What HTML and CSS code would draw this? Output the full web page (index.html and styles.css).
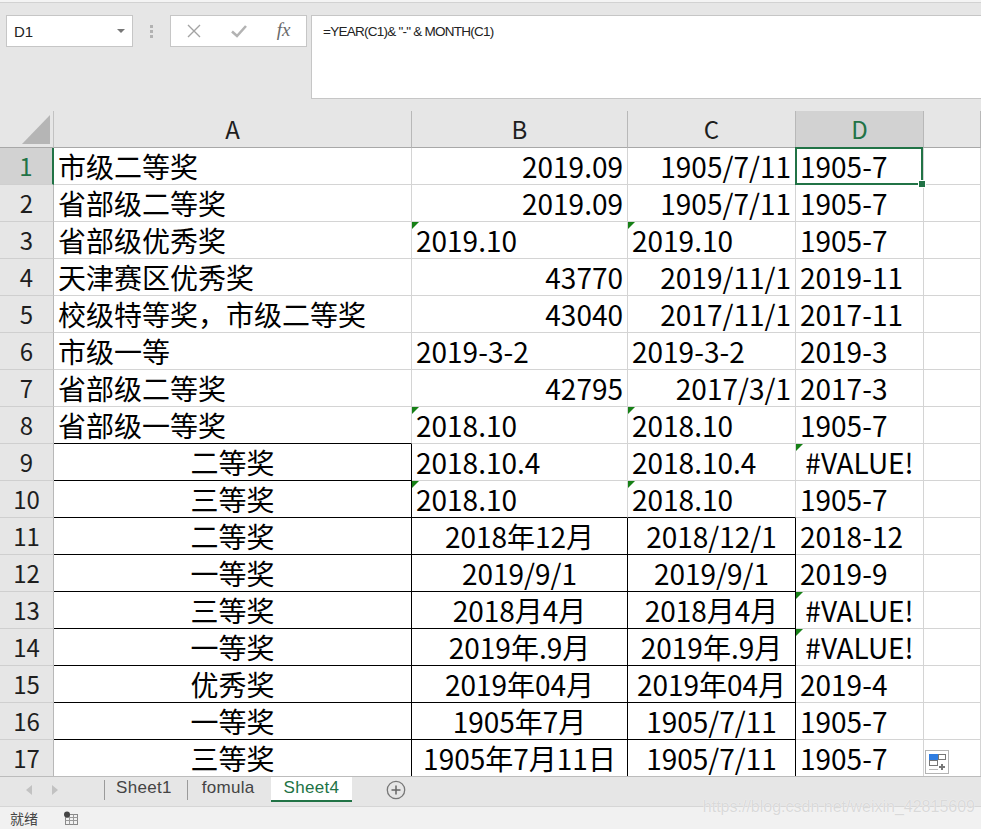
FILE: index.html
```html
<!DOCTYPE html>
<html lang="zh">
<head>
<meta charset="utf-8">
<title>Sheet4</title>
<link rel="stylesheet" href="styles.css">
</head>
<body>
<div class="top">
  <div class="topline"></div>
  <div class="frow">
    <div class="namebox"><span>D1</span><i class="caret"></i></div>
    <div class="grip"><i></i><i></i><i></i></div>
    <div class="fbtns">
      <span class="fbtn"><svg width="16" height="16" viewBox="0 0 16 16"><path d="M2 2L14 14M14 2L2 14" stroke="#a3a3a3" stroke-width="1.4" fill="none"/></svg></span>
      <span class="fbtn"><svg width="18" height="16" viewBox="0 0 18 16"><path d="M2 8.5L7 13L16 3" stroke="#b3b3b3" stroke-width="2.6" fill="none"/></svg></span>
      <span class="fbtn fx">fx</span>
    </div>
    <div class="fbar">=YEAR(C1)&amp; "-" &amp; MONTH(C1)</div>
  </div>
</div>

<div class="sheet">
  <div class="c h corner"><svg width="53" height="36" viewBox="0 0 53 36"><path d="M50 4V33H22Z" fill="#b5b5b5"/></svg></div>
  <div class="c h">A</div><div class="c h">B</div><div class="c h">C</div><div class="c h hs">D</div><div class="c h"></div>

  <div class="c rh rs">1</div><div class="c">市级二等奖</div><div class="c r">2019.09</div><div class="c r">1905/7/11</div><div class="c sel">1905-7<span class="selbox"><i class="handle"></i></span></div><div class="c"></div>
  <div class="c rh">2</div><div class="c">省部级二等奖</div><div class="c r">2019.09</div><div class="c r">1905/7/11</div><div class="c">1905-7</div><div class="c"></div>
  <div class="c rh">3</div><div class="c">省部级优秀奖</div><div class="c t">2019.10</div><div class="c t">2019.10</div><div class="c">1905-7</div><div class="c"></div>
  <div class="c rh">4</div><div class="c">天津赛区优秀奖</div><div class="c r">43770</div><div class="c r">2019/11/1</div><div class="c">2019-11</div><div class="c"></div>
  <div class="c rh">5</div><div class="c">校级特等奖，市级二等奖</div><div class="c r">43040</div><div class="c r">2017/11/1</div><div class="c">2017-11</div><div class="c"></div>
  <div class="c rh">6</div><div class="c">市级一等</div><div class="c">2019-3-2</div><div class="c">2019-3-2</div><div class="c">2019-3</div><div class="c"></div>
  <div class="c rh">7</div><div class="c">省部级二等奖</div><div class="c r">42795</div><div class="c r">2017/3/1</div><div class="c">2017-3</div><div class="c"></div>
  <div class="c rh">8</div><div class="c kb">省部级一等奖</div><div class="c t">2018.10</div><div class="c t">2018.10</div><div class="c">1905-7</div><div class="c"></div>
  <div class="c rh">9</div><div class="c m k">二等奖</div><div class="c">2018.10.4</div><div class="c">2018.10.4</div><div class="c m t">#VALUE!</div><div class="c"></div>
  <div class="c rh">10</div><div class="c m k">三等奖</div><div class="c t kb">2018.10</div><div class="c t kb">2018.10</div><div class="c">1905-7</div><div class="c"></div>
  <div class="c rh">11</div><div class="c m k">二等奖</div><div class="c m k">2018年12月</div><div class="c m k">2018/12/1</div><div class="c">2018-12</div><div class="c"></div>
  <div class="c rh">12</div><div class="c m k">一等奖</div><div class="c m k">2019/9/1</div><div class="c m k">2019/9/1</div><div class="c">2019-9</div><div class="c"></div>
  <div class="c rh">13</div><div class="c m k">三等奖</div><div class="c m k">2018月4月</div><div class="c m k">2018月4月</div><div class="c m t">#VALUE!</div><div class="c"></div>
  <div class="c rh">14</div><div class="c m k">一等奖</div><div class="c m k">2019年.9月</div><div class="c m k">2019年.9月</div><div class="c m t">#VALUE!</div><div class="c"></div>
  <div class="c rh">15</div><div class="c m k">优秀奖</div><div class="c m k">2019年04月</div><div class="c m k">2019年04月</div><div class="c">2019-4</div><div class="c"></div>
  <div class="c rh">16</div><div class="c m k">一等奖</div><div class="c m k">1905年7月</div><div class="c m k">1905/7/11</div><div class="c">1905-7</div><div class="c"></div>
  <div class="c rh">17</div><div class="c m k">三等奖</div><div class="c m k">1905年7月11日</div><div class="c m k">1905/7/11</div><div class="c">1905-7</div><div class="c qcell"><span class="quick"><svg width="22" height="22" viewBox="0 0 22 22"><rect x="3" y="3" width="9" height="6" fill="#2f7de1"/><rect x="12.5" y="3.5" width="7" height="5" fill="none" stroke="#777"/><rect x="3.5" y="9.5" width="8" height="5" fill="none" stroke="#777"/><path d="M3.5 18.5H12" stroke="#777" stroke-dasharray="1 1"/><path d="M16 13V19M13 16H19" stroke="#777" stroke-width="2"/></svg></span></div>
</div>

<div class="tabbar">
  <div class="nav"><i class="arr al"></i><i class="arr ar"></i></div>
  <div class="tab first">Sheet1</div>
  <div class="tab">fomula</div>
  <div class="tab active">Sheet4</div>
  <div class="add"><svg width="20" height="20" viewBox="0 0 20 20"><circle cx="10" cy="10" r="8.7" fill="none" stroke="#777" stroke-width="1.3"/><path d="M10 5.5V14.5M5.5 10H14.5" stroke="#666" stroke-width="1.5"/></svg></div>
</div>
<div class="status">
  <span class="ready">就绪</span>
  <span class="sicon"><svg width="16" height="14" viewBox="0 0 16 14"><rect x="2.5" y="3.5" width="12" height="10" fill="none" stroke="#888"/><path d="M2.5 6.5H14.5M2.5 9.5H14.5M6.5 3.5V13.5M10.5 3.5V13.5" stroke="#999"/><circle cx="4" cy="3.5" r="3" fill="#444"/></svg></span>
</div>
<div class="watermark">https://blog.csdn.net/weixin_42815609</div>
</body>
</html>
```
FILE: styles.css
```css
html, body {
  margin: 0;
  padding: 0;
}
body {
  width: 981px;
  height: 829px;
  overflow: hidden;
  background: #e6e6e6;
  font-family: "Noto Sans CJK SC", "Liberation Sans", sans-serif;
  position: relative;
}

/* ---------- formula area ---------- */
.top {
  height: 111px;
  box-sizing: border-box;
}
.topline {
  height: 2px;
  background: #f4f4f4;
  border-bottom: 1px solid #d2d2d2;
}
.frow {
  display: flex;
  align-items: flex-start;
  margin-top: 12px;
  padding-left: 6px;
}
.namebox {
  width: 127px;
  height: 32px;
  box-sizing: border-box;
  background: #fff;
  border: 1px solid #c6c6c6;
  display: flex;
  align-items: center;
  padding: 0 7px 0 7px;
  font-family: "Liberation Sans", sans-serif;
  font-size: 15px;
  color: #222;
}
.caret {
  margin-left: auto;
  width: 0;
  height: 0;
  border-top: 4px solid #777;
  border-left: 4px solid transparent;
  border-right: 4px solid transparent;
}
.grip {
  width: 37px;
  height: 32px;
  display: flex;
  flex-direction: column;
  align-items: center;
  justify-content: center;
  gap: 2px;
}
.grip i {
  display: block;
  width: 3px;
  height: 3px;
  background: #b2b2b2;
}
.fbtns {
  width: 137px;
  height: 32px;
  box-sizing: border-box;
  background: #fff;
  border: 1px solid #c6c6c6;
  display: flex;
}
.fbtn {
  width: 45px;
  display: flex;
  align-items: center;
  justify-content: center;
}
.fx {
  font-family: "Liberation Serif", serif;
  font-style: italic;
  font-size: 19px;
  color: #6a6a6a;
  padding-bottom: 2px;
}
.fbar {
  flex: 1;
  margin-left: 4px;
  height: 84px;
  box-sizing: border-box;
  background: #fff;
  border: 1px solid #c6c6c6;
  border-right: none;
  padding: 6px 0 0 11px;
  font-family: "Liberation Sans", sans-serif;
  font-size: 13.5px;
  letter-spacing: -0.75px;
  line-height: 20px;
  color: #222;
}

/* ---------- sheet grid ---------- */
.sheet {
  display: grid;
  grid-template-columns: 54px 358px 216px 168px 128px 57px;
  grid-auto-rows: 37px;
  height: 665px;
  overflow: hidden;
}
.c {
  box-sizing: border-box;
  background: #fff;
  border-right: 1px solid #d4d4d4;
  border-bottom: 1px solid #d4d4d4;
  padding: 0 4px;
  font-size: 28px;
  line-height: 36px;
  color: #000;
  white-space: nowrap;
  position: relative;
}
.c.r { text-align: right; }
.c.m { text-align: center; }
.c.k {
  border-right-color: #000;
  border-bottom-color: #000;
}
.c.kb { border-bottom-color: #000; }
.c.t::before {
  content: "";
  position: absolute;
  left: 0;
  top: 0;
  border-top: 7px solid #168016;
  border-right: 7px solid transparent;
}
.c.h {
  background: #e6e6e6;
  border-right-color: #b8b8b8;
  border-bottom-color: #a8a8a8;
  text-align: center;
  font-size: 24px;
  color: #1e1e1e;
  padding: 0;
}
.c.corner {
  border-right-color: #c2c2c2;
}
.c.corner svg { display: block; }
.c.hs {
  background: #d2d2d2;
  color: #217346;
}
.c.rh {
  background: #e6e6e6;
  border-right-color: #b8b8b8;
  border-bottom-color: #cfcfcf;
  text-align: center;
  font-size: 24px;
  color: #1e1e1e;
  padding: 0;
}
.c.rs {
  background: #d2d2d2;
  color: #217346;
  border-right: 2px solid #217346;
}
.c.sel { z-index: 2; }
.selbox {
  position: absolute;
  left: -1px;
  top: -1px;
  width: 128px;
  height: 38px;
  box-sizing: border-box;
  border: 2px solid #217346;
}
.handle {
  position: absolute;
  right: -5px;
  bottom: -5px;
  width: 6px;
  height: 6px;
  background: #217346;
  border: 1px solid #fff;
}
.quick {
  position: absolute;
  left: 1px;
  top: 10px;
  width: 24px;
  height: 24px;
  box-sizing: border-box;
  background: #fff;
  border: 1px solid #b4b4b4;
  display: flex;
  align-items: center;
  justify-content: center;
}

/* ---------- tabs ---------- */
.tabbar {
  height: 30px;
  box-sizing: border-box;
  border-top: 1px solid #bcbcbc;
  background: #e6e6e6;
  display: flex;
  align-items: flex-start;
  font-family: "Liberation Sans", sans-serif;
  font-size: 17px;
  letter-spacing: 0.3px;
}
.nav {
  width: 104px;
  height: 25px;
  display: flex;
  align-items: center;
  padding-left: 26px;
  box-sizing: border-box;
  gap: 20px;
}
.arr {
  width: 0;
  height: 0;
  border-top: 5px solid transparent;
  border-bottom: 5px solid transparent;
}
.al { border-right: 6px solid #c2c2c2; }
.ar { border-left: 6px solid #c2c2c2; }
.tab {
  height: 25px;
  line-height: 22px;
  padding: 0 15px;
  color: #444;
  position: relative;
  box-sizing: border-box;
}
.tab.first { padding-left: 12px; }
.tab::before {
  content: "";
  position: absolute;
  left: 0;
  top: 3px;
  height: 20px;
  border-left: 1px solid #9a9a9a;
}
.tab.active {
  background: #fff;
  color: #217346;
  border-bottom: 2px solid #217346;
  padding: 0 13px;
  margin-left: 1px;
}
.tab.active::before { display: none; }
.add {
  margin-left: 34px;
  margin-top: 3px;
  line-height: 0;
}

/* ---------- status ---------- */
.status {
  height: 23px;
  background: #f1f1f1;
  border-top: 1px solid #d6d6d6;
  box-sizing: border-box;
  display: flex;
  align-items: center;
  font-size: 14px;
  color: #444;
  padding-left: 10px;
}
.sicon {
  margin-left: 25px;
  line-height: 0;
}
.watermark {
  position: absolute;
  right: 6px;
  top: 798px;
  font-family: "Liberation Sans", sans-serif;
  font-size: 16px;
  color: #d9d9d9;
  text-shadow: 0 0 1px #fff;
}
```
